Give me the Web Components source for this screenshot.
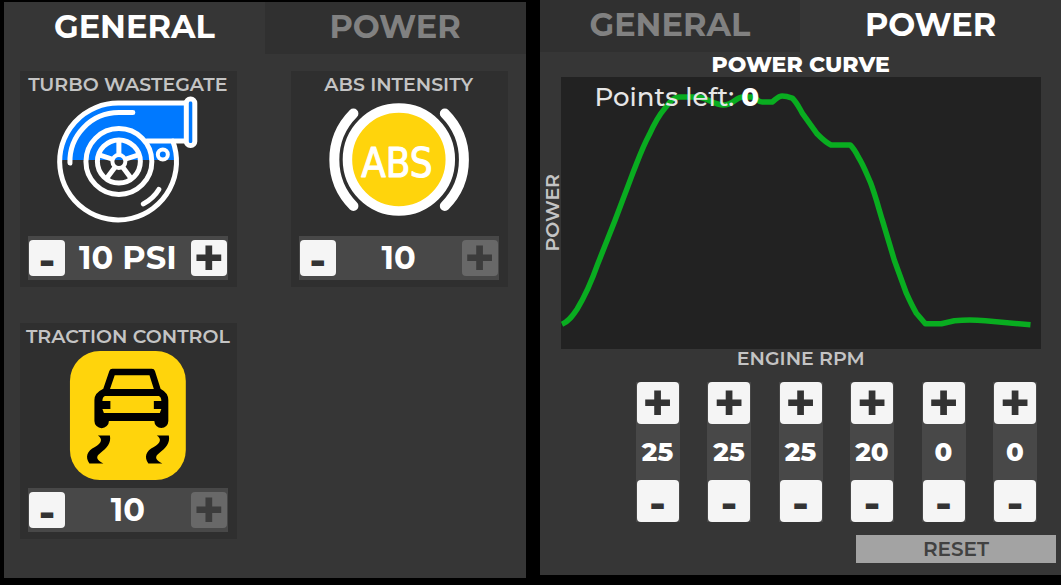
<!DOCTYPE html>
<html lang="en">
<head>
<meta charset="utf-8">
<meta name="viewport" content="width=device-width, initial-scale=1">
<title>Vehicle Tuning</title>
<style>
    :root {
        --panel: #363636;
        --panel-dark: #303030;
        --card: #2f2f2f;
        --plot: #222222;
        --track: #484848;
        --key: #f5f5f5;
        --ink: #333333;
        --muted: #c4c4c4;
    }
    body {
        margin: 0;
        background: #000;
        color: #fff;
        font-family: Montserrat, Inter, "Open Sans", sans-serif;
    }
    main {
        display: flex;
        align-items: flex-start;
        gap: 14px;
        padding-left: 4px;
    }
    main > tune-panel:first-child { margin-top: 2px; }
    .cards {
        display: grid;
        grid-template-columns: 1fr 1fr;
        gap: 36px 54px;
        padding: 17px 18px 39px 16px;
    }
    .points {
        display: flex;
        justify-content: space-between;
        padding: 13px 24px 13px 96px;
    }
    .icon {
        display: block;
        width: 100%;
        height: 132px;
        overflow: visible;
    }
</style>
</head>
<body>
<main>
    <tune-panel active="general">
        <div class="cards">
            <tune-card label="TURBO WASTEGATE">
                <svg class="icon" viewBox="0 0 200 132" fill="none" stroke="#fff" stroke-width="5" stroke-linecap="round" aria-hidden="true">
                    <path fill="#0079ff" stroke="none" d="M32 64 A58 58 0 0 1 91 7 H167 V45 H146 Q149 54 149 64 Z"/>
                    <path d="M158 7 H91 A58.5 58.5 0 1 0 145 45"/>
                    <path d="M119 45 H158"/>
                    <rect x="158.500" y="3" width="8.500" height="46.500" rx="4" fill="#0079ff"/>
                    <path d="M42 67 A49 49 0 0 1 91 16.500 H105"/>
                    <path d="M115.500 108 Q126 102 131 93.500"/>
                    <circle cx="91" cy="65.500" r="33"/>
                    <circle cx="91" cy="65.500" r="21.500"/>
                    <circle cx="91" cy="65.500" r="6.500" stroke-width="4"/>
                    <path d="M91 58V45 M98 63L110 59 M95.500 72L103 82 M86.500 72L79 82 M84 63L72 59"/>
                    <circle cx="135" cy="58.500" r="5" stroke-width="4"/>
                </svg>
                <tune-stepper slot="control" name="Turbo wastegate" value="10" unit="PSI" max="30"></tune-stepper>
            </tune-card>
            <tune-card label="ABS INTENSITY">
                <svg class="icon" viewBox="0 0 200 132" aria-hidden="true">
                    <circle cx="100" cy="63.500" r="51.500" fill="#ffd40c" stroke="#fff" stroke-width="9.500"/>
                    <path d="M54.500 17.500 A65.500 65.500 0 0 0 54.500 110 M146 17.500 A65.500 65.500 0 0 1 146 110" fill="none" stroke="#fff" stroke-width="10" stroke-linecap="round"/>
                    <text x="98" y="81" text-anchor="middle" font-family="DejaVu Sans Condensed, DejaVu Sans, sans-serif" font-size="40" fill="#fff" stroke="#fff" stroke-width="1" stroke-linejoin="round">ABS</text>
                </svg>
                <tune-stepper slot="control" name="ABS intensity" value="10" max="10"></tune-stepper>
            </tune-card>
            <tune-card label="TRACTION CONTROL">
                <svg class="icon" viewBox="0 0 200 132" aria-hidden="true">
                    <rect x="42" y="3" width="116" height="129" rx="30" fill="#ffd40c"/>
                    <path d="M77 46 L84.500 24 H124 L131 46" fill="none" stroke="#000" stroke-width="6.500" stroke-linejoin="round"/>
                    <path fill-rule="evenodd" d="M75 41 H133 Q140.500 45 140.500 52 V73 A7 7 0 0 1 126.500 73 H81 A7 7 0 0 1 66.500 73 V52 Q66.500 45 75 41 Z
                        M77 48 Q74.500 49 74.500 53 H82.500 V61 H74.500 L76 65 H132 L133.500 61 H126 V53 H133.500 Q133.500 49 131 48 Z"/>
                    <path id="skid" d="M70 87.500 H82 C83.500 95 79 100 72.500 105 C67 109 69 112 75.500 115.500 H61.500 C57 109 59 103 67 99 C74 95 75 91 70 87.500 Z"/>
                    <use href="#skid" x="59"/>
                </svg>
                <tune-stepper slot="control" name="Traction control" value="10" max="10"></tune-stepper>
            </tune-card>
        </div>
    </tune-panel>

    <tune-panel active="power">
        <power-curve points="0"></power-curve>
        <div class="points">
            <tune-stepper vertical name="Point 1" value="25"></tune-stepper>
            <tune-stepper vertical name="Point 2" value="25"></tune-stepper>
            <tune-stepper vertical name="Point 3" value="25"></tune-stepper>
            <tune-stepper vertical name="Point 4" value="20"></tune-stepper>
            <tune-stepper vertical name="Point 5" value="0"></tune-stepper>
            <tune-stepper vertical name="Point 6" value="0"></tune-stepper>
        </div>
        <reset-button>RESET</reset-button>
    </tune-panel>
</main>

<script>
// Panel: two tabs on top, the page content goes in the slot
class TunePanel extends HTMLElement {
    constructor() {
        super();
        this.attachShadow({ mode: 'open' });
        this.shadowRoot.innerHTML = `
            <style>
                :host {
                    display: block;
                    flex: 1;
                    min-width: 0;
                    background: var(--panel);
                }
                nav { display: flex; }
                button {
                    flex: 1;
                    height: 52px;
                    padding: 0 0 3px;
                    border: 0;
                    background: var(--panel-dark);
                    color: #818181;
                    font: inherit;
                    font-size: 32px;
                    font-weight: 700;
                    cursor: pointer;
                }
                button[aria-selected="true"] {
                    background: var(--panel);
                    color: #fff;
                }
            </style>
            <nav role="tablist">
                <button role="tab" data-tab="general">GENERAL</button>
                <button role="tab" data-tab="power">POWER</button>
            </nav>
            <slot></slot>
        `;
    }

    connectedCallback() {
        this.shadowRoot.querySelectorAll('button').forEach((tab) => {
            tab.setAttribute('aria-selected', tab.dataset.tab === this.getAttribute('active'));
        });
    }
}

// Card: label, icon, and a stepper in the "control" slot
class TuneCard extends HTMLElement {
    constructor() {
        super();
        this.attachShadow({ mode: 'open' });
        this.shadowRoot.innerHTML = `
            <style>
                :host {
                    display: block;
                    min-width: 0;
                    padding: 3px 9px 7px 8px;
                    background: var(--card);
                }
                h2 {
                    display: flex;
                    justify-content: center;
                    margin: 0;
                    color: var(--muted);
                    font-size: 19px;
                    font-weight: 600;
                    line-height: 22px;
                    white-space: nowrap;
                }
                .control { margin-top: 8px; }
            </style>
            <h2></h2>
            <slot></slot>
            <div class="control"><slot name="control"></slot></div>
        `;
    }

    connectedCallback() {
        this.shadowRoot.querySelector('h2').textContent = this.getAttribute('label');
    }
}

// Stepper: horizontal by default, plus on top when vertical
class TuneStepper extends HTMLElement {
    constructor() {
        super();
        this.attachShadow({ mode: 'open' });
        this.shadowRoot.innerHTML = `
            <style>
                :host {
                    --size: 36px;
                    display: flex;
                    align-items: center;
                    justify-content: space-between;
                    padding: 4px 1px;
                    background: var(--track);
                }
                :host([vertical]) {
                    --size: 42px;
                    flex-direction: column-reverse;
                    height: 140px;
                    padding: 0 1px;
                }
                button {
                    display: flex;
                    align-items: center;
                    justify-content: center;
                    width: var(--size);
                    height: var(--size);
                    padding: 0;
                    border: 0;
                    border-radius: 4px;
                    background: var(--key);
                    color: var(--ink);
                    font: inherit;
                    font-weight: 700;
                    line-height: 32px;
                    cursor: pointer;
                }
                .minus {
                    padding-top: 4px;
                    font-size: 44px;
                }
                .plus { font-size: 52px; }
                button:disabled {
                    background: #686868;
                    color: #3c3c3c;
                    cursor: default;
                }
                output {
                    font-size: 32px;
                    font-weight: 700;
                    line-height: 36px;
                    white-space: nowrap;
                }
                :host([vertical]) output {
                    font-size: 26px;
                    font-weight: 800;
                }
            </style>
            <button class="minus">-</button>
            <output></output>
            <button class="plus">+</button>
        `;
        this.shadowRoot.querySelector('.minus').addEventListener('click', () => this.step(-1));
        this.shadowRoot.querySelector('.plus').addEventListener('click', () => this.step(1));
    }

    connectedCallback() {
        this.value = Number(this.getAttribute('value'));
        this.max = Number(this.getAttribute('max') || 100);
        this.render();
    }

    step(amount) {
        this.value = Math.min(this.max, Math.max(0, this.value + amount));
        this.render();
    }

    render() {
        const name = this.getAttribute('name');
        const unit = this.getAttribute('unit');
        const plus = this.shadowRoot.querySelector('.plus');
        const output = this.shadowRoot.querySelector('output');
        output.textContent = unit ? `${this.value} ${unit}` : this.value;
        output.setAttribute('aria-label', name);
        plus.disabled = this.value >= this.max;
        plus.setAttribute('aria-label', `Increase ${name}`);
        this.shadowRoot.querySelector('.minus').setAttribute('aria-label', `Decrease ${name}`);
    }
}

// Power over engine rpm
class PowerCurve extends HTMLElement {
    constructor() {
        super();
        this.attachShadow({ mode: 'open' });
        this.shadowRoot.innerHTML = `
            <style>
                :host {
                    display: grid;
                    grid-template-columns: 21px 1fr 20px;
                    justify-items: center;
                }
                h2 {
                    grid-column: 2;
                    margin: 0;
                    font-size: 22px;
                    font-weight: 800;
                    line-height: 25px;
                }
                .axis {
                    color: var(--muted);
                    font-size: 19px;
                    font-weight: 600;
                    line-height: 20px;
                }
                .y {
                    grid-column: 1;
                    align-self: center;
                    justify-self: end;
                    line-height: 16px;
                    writing-mode: vertical-rl;
                    transform: rotate(180deg);
                }
                .x { grid-column: 2; }
                .plot {
                    position: relative;
                    width: 100%;
                    background: var(--plot);
                }
                svg {
                    display: block;
                    width: 100%;
                }
                /* the counter lies over the curve */
                p {
                    position: absolute;
                    top: 4px;
                    left: 34px;
                    margin: 0;
                    color: #e6e6e6;
                    font-size: 26px;
                    font-weight: 500;
                    line-height: 32px;
                }
                b {
                    color: #fff;
                    font-weight: 800;
                }
            </style>
            <h2>POWER CURVE</h2>
            <div class="axis y">POWER</div>
            <div class="plot">
                <svg viewBox="0 0 480 272" fill="none" stroke="#09ad20" stroke-width="5.500" stroke-linejoin="round" aria-hidden="true">
                    <path d="M1 247 C8 244 12 238 16 232 C24 219 31 203 37 186 L54 143 L71 98 C77 83 81 71 88 58 C93 47 98 38 104 31
                        C109 25 112 20 118 20 H136 C145 20 153 28 162 28 C173 28 174 20 182 20 H190 C196 20 196 25 201 25 H211
                        C215 22 217 19 221 19 C225 19 228 20 231 21 C236 26 238 31 241 36 L256 57 C261 62 265 66 270 68 H289
                        C293 72 295 76 297 80 C302 88 305 96 309 105 C314 118 317 130 321 143 L333 183 L345 216 C349 225 352 231 355 236 L364 246.500
                        H380 L393 243.500 Q408 242 424 243.500 L469 247.500"/>
                </svg>
                <p>Points left: <b></b></p>
            </div>
            <div class="axis x">ENGINE RPM</div>
        `;
    }

    connectedCallback() {
        this.shadowRoot.querySelector('b').textContent = this.getAttribute('points');
    }
}

class ResetButton extends HTMLElement {
    constructor() {
        super();
        this.attachShadow({ mode: 'open' });
        this.shadowRoot.innerHTML = `
            <style>
                :host {
                    display: flex;
                    justify-content: flex-end;
                    padding: 0 5px 12px 0;
                }
                button {
                    width: 200px;
                    height: 28px;
                    padding: 0;
                    border: 0;
                    background: #a3a3a3;
                    color: #414141;
                    font: inherit;
                    font-size: 20px;
                    font-weight: 600;
                    line-height: 28px;
                    cursor: pointer;
                }
            </style>
            <button><slot></slot></button>
        `;
    }
}

customElements.define('tune-panel', TunePanel);
customElements.define('tune-card', TuneCard);
customElements.define('tune-stepper', TuneStepper);
customElements.define('power-curve', PowerCurve);
customElements.define('reset-button', ResetButton);
</script>
</body>
</html>
